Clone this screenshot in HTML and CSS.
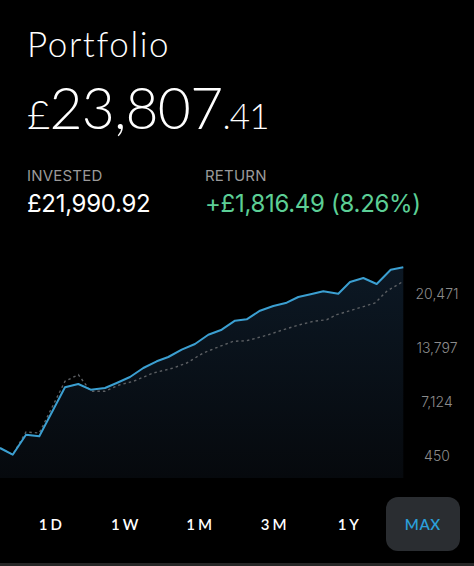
FILE: index.html
```html
<!DOCTYPE html>
<html lang="en">
<head>
    <meta charset="UTF-8">
    <meta name="viewport" content="width=device-width, initial-scale=1.0">
    <title>Portfolio</title>
    <link rel="stylesheet" href="styles.css">
</head>
<body>
    <div class="screen">
        <header class="summary">
            <h1 class="title">Portfolio</h1>
            <div class="balance"><span class="currency">£</span>23,807<span class="pence">.41</span></div>
        </header>

        <div class="stats">
            <div class="stat">
                <div class="stat-label">INVESTED</div>
                <div class="stat-value">£21,990.92</div>
            </div>
            <div class="stat">
                <div class="stat-label">RETURN</div>
                <div class="stat-value positive">+£1,816.49 (8.26%)</div>
            </div>
        </div>

        <div class="chart">
            <svg class="chart-plot" width="404" height="230" viewBox="0 0 404 230">
                <defs>
                    <linearGradient id="areaFill" x1="0" y1="0" x2="0" y2="1">
                        <stop offset="0" stop-color="#0c1824"/>
                        <stop offset="1" stop-color="#06090d"/>
                    </linearGradient>
                </defs>
                <path class="area" fill="url(#areaFill)" d="M0,200 L12.7,206.7 L26,186.7 L39.3,188.3 L65,139.3 L78.3,136 L90.7,141.7 L105,140 L116.7,135 L130,129 L143.3,120 L156.7,113.3 L168.3,109 L181.7,101.7 L195,96 L208.3,86.7 L221.7,81.7 L235,72.7 L246.7,71.3 L260,62.7 L273.3,58 L286.7,54.7 L298.3,49 L311.7,46 L323.3,43.3 L338.3,45.7 L350,34 L363.3,30 L376.7,36 L390.7,21.7 L403.3,19.3 L403.3,230 L0,230 Z"/>
                <path class="invested-line" d="M0,200 L12.7,206.7 L26,184 L39.3,185 L65,133.3 L78.3,126.7 L90.7,143.3 L105,143.3 L120,136.7 L133.3,133.3 L153.3,125 L173.3,120 L186.7,115 L203.3,105 L220,98.3 L233.3,93.3 L246.7,92.7 L266.7,87.3 L283.3,81.7 L300,76.7 L313.3,73.3 L326.7,71.7 L336.7,66.7 L353.3,61.7 L375,55 L386.7,43.3 L403.3,33.3"/>
                <path class="value-line" d="M0,200 L12.7,206.7 L26,186.7 L39.3,188.3 L65,139.3 L78.3,136 L90.7,141.7 L105,140 L116.7,135 L130,129 L143.3,120 L156.7,113.3 L168.3,109 L181.7,101.7 L195,96 L208.3,86.7 L221.7,81.7 L235,72.7 L246.7,71.3 L260,62.7 L273.3,58 L286.7,54.7 L298.3,49 L311.7,46 L323.3,43.3 L338.3,45.7 L350,34 L363.3,30 L376.7,36 L390.7,21.7 L403.3,19.3"/>
            </svg>
            <div class="axis">
                <span>20,471</span>
                <span>13,797</span>
                <span>7,124</span>
                <span>450</span>
            </div>
        </div>

        <nav class="ranges">
            <button class="range">1D</button>
            <button class="range">1W</button>
            <button class="range">1M</button>
            <button class="range">3M</button>
            <button class="range">1Y</button>
            <button class="range active">MAX</button>
        </nav>

        <div class="home-bar"></div>
    </div>
</body>
</html>
```

FILE: styles.css
```css
body {
    margin: 0;
    background: #000;
    color: #fff;
    font-family: "Inter", "Liberation Sans", sans-serif;
}
.screen {
    width: 474px;
    height: 566px;
    display: flex;
    flex-direction: column;
    overflow: hidden;
}
.summary {
    padding: 23px 0 0 27px;
}
.title {
    margin: 0;
    font-family: "Lato", sans-serif;
    font-weight: 300;
    font-size: 35px;
    line-height: 40px;
    letter-spacing: 1.6px;
}
.balance {
    margin-top: 12px;
    font-family: "Lato", sans-serif;
    font-weight: 300;
    font-size: 57px;
    line-height: 64px;
    letter-spacing: -0.8px;
}
.currency {
    font-size: 40px;
}
.pence {
    font-size: 35px;
}

/* Invested / return */
.stats {
    display: grid;
    grid-template-columns: 178px auto;
    padding: 20px 0 0 27px;
}
.stat-label {
    color: #9a9a9a;
    font-size: 15px;
    line-height: 18px;
    letter-spacing: 0.2px;
}
.stat-value {
    margin-top: 5px;
    font-size: 24px;
    line-height: 28px;
    letter-spacing: -0.3px;
}
.positive {
    color: #5ccf96;
}

/* Chart */
.chart {
    display: flex;
    margin-top: 30px;
    height: 230px;
}
.chart-plot {
    display: block;
    flex: none;
}
.value-line {
    fill: none;
    stroke: #3b9fd1;
    stroke-width: 2;
    stroke-linejoin: round;
}
.invested-line {
    fill: none;
    stroke: #5c5f63;
    stroke-width: 1.4;
    stroke-dasharray: 2.5 3;
}
.axis {
    flex: 1;
    display: flex;
    flex-direction: column;
    padding-top: 19px;
}
.axis span {
    height: 54px;
    line-height: 54px;
    text-align: center;
    color: #8c8c8c;
    font-size: 14px;
    font-weight: 300;
    padding-right: 4px;
}

/* Range tabs */
.ranges {
    display: grid;
    grid-template-columns: repeat(6, 1fr);
    margin-top: 19px;
    padding: 0 14px 0 13px;
}
.range {
    height: 54px;
    background: none;
    border: none;
    border-radius: 12px;
    color: #fff;
    font-family: "Lato", sans-serif;
    font-weight: 600;
    font-size: 15px;
    letter-spacing: 3px;
    padding: 0 0 0 3px;
    cursor: pointer;
}
.range.active {
    background: #2a2d31;
    color: #2b9fd9;
    letter-spacing: 0.5px;
    padding: 0;
}
.home-bar {
    margin-top: auto;
    height: 3px;
    background: #262626;
}
```
